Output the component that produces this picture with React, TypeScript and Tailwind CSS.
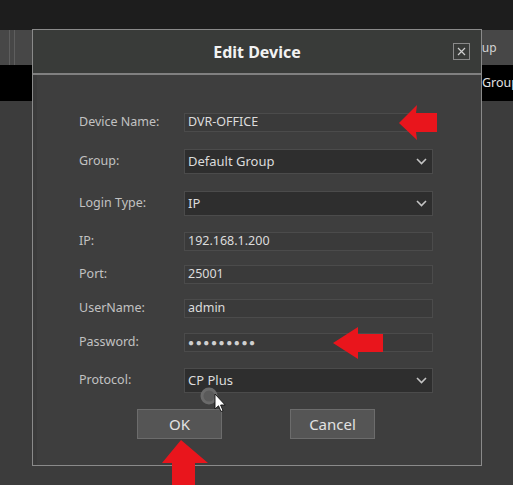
const font = { fontFamily: '"Noto Sans", "Open Sans", "Liberation Sans", sans-serif' };

type Field = { label: string; value: string; kind: "input" | "select"; mt: string };

const fields: Field[] = [
  { label: "Device Name:", value: "DVR-OFFICE", kind: "input", mt: "mt-[38px]" },
  { label: "Group:", value: "Default Group", kind: "select", mt: "mt-[17px]" },
  { label: "Login Type:", value: "IP", kind: "select", mt: "mt-[17px]" },
  { label: "IP:", value: "192.168.1.200", kind: "input", mt: "mt-[16px]" },
  { label: "Port:", value: "25001", kind: "input", mt: "mt-[14px]" },
  { label: "UserName:", value: "admin", kind: "input", mt: "mt-[15px]" },
  { label: "Password:", value: "●●●●●●●●●", kind: "input", mt: "mt-[15px]" },
  { label: "Protocol:", value: "CP Plus", kind: "select", mt: "mt-[16px]" },
];

const Chevron = () => (
  <svg width="11" height="7" viewBox="0 0 11 7" className="shrink-0">
    <path d="M1 1l4.5 4.5L10 1" fill="none" stroke="#c4c4c4" strokeWidth="1.6" />
  </svg>
);

const Row = ({ f }: { f: Field }) => (
  <div className={`flex items-center ${f.mt}`}>
    <div className="w-[105px] pl-[46px] box-content text-[12.5px] text-[#c2c2c2] whitespace-nowrap">{f.label}</div>
    {f.kind === "input" ? (
      <div className="flex h-[19px] w-[249px] items-center border border-[#4b4b4b] bg-[#3a3a3a] pl-[3px] text-[12.5px] text-[#dcdcdc]">
        {f.label === "Password:" ? (
          <span className="text-[10px] tracking-[1.6px] text-[#d0d0d0]">{f.value}</span>
        ) : (
          f.value
        )}
      </div>
    ) : (
      <div className="flex h-[25px] w-[249px] items-center justify-between border border-[#4b4b4b] bg-[#2e2e2e] pl-[3px] pr-[5px] text-[13px] text-[#dcdcdc]">
        <span>{f.value}</span>
        <Chevron />
      </div>
    )}
  </div>
);

export default function App() {
  return (
    <div className="relative h-[485px] w-[513px] overflow-hidden bg-[#3c3c3c]" style={font}>
      {/* background window */}
      <div className="h-[30px] bg-[#1d1d1d]" />
      <div className="flex h-[35px] items-center bg-[#474747] text-[12px] text-[#d4d4d4]">
        <div className="ml-[9px] h-full w-[1px] bg-[#5e5e5e]" />
        <div className="ml-[4px] h-full w-[1px] bg-[#5e5e5e]" />
        <span className="ml-[446px]">Group</span>
      </div>
      <div className="flex h-[36px] items-center bg-black pl-[482px] text-[12.5px] text-[#e2e2e2]">Group</div>

      {/* dialog */}
      <div className="absolute left-[32px] top-[29px] flex h-[437px] w-[450px] flex-col border border-[#8a8a8a] bg-[#3e3e3e] shadow-[inset_4px_0_0_#3a3a3a]">
        <div className="relative flex h-[43px] shrink-0 items-center justify-center bg-[#393b39]">
          <span className="text-[16px] font-bold text-[#f2f2f2]">Edit Device</span>
          <div className="absolute left-[420px] top-[13px] flex h-[17px] w-[17px] items-center justify-center border border-[#8a8a8a]">
            <svg width="9" height="9" viewBox="0 0 9 9">
              <path d="M1 1l7 7M8 1l-7 7" stroke="#cfcfcf" strokeWidth="1.2" />
            </svg>
          </div>
        </div>
        <div className="h-[2px] shrink-0 bg-[#808080]" />
        <div className="flex flex-col">
          {fields.map((f) => (
            <Row key={f.label} f={f} />
          ))}
          <div className="mt-[16px] flex pl-[104px]">
            <button className="flex h-[30px] w-[85px] items-center justify-center border border-[#6c6c6c] bg-[#555555] text-[15px] text-[#e2e2e2]">
              OK
            </button>
            <button className="ml-[68px] flex h-[30px] w-[85px] items-center justify-center border border-[#6c6c6c] bg-[#555555] text-[15px] text-[#e2e2e2]">
              Cancel
            </button>
          </div>
        </div>
      </div>

      {/* annotations and cursor */}
      <svg className="pointer-events-none absolute inset-0" width="513" height="485" viewBox="0 0 513 485">
        <polygon points="399,123 417,105 416,113 437,113 437,132 416,132 417,140" fill="#e9151c" />
        <polygon points="333,343 358,327 358,334 383,334 383,352 358,352 358,359" fill="#e9151c" />
        <polygon points="181,440 208,463 195,463 195,485 172,485 172,463 162,463" fill="#e9151c" />
        <circle cx="209" cy="396" r="8.5" fill="#6a6a6a" />
        <circle cx="209" cy="396" r="5.5" fill="#5a5a5a" />
        <path d="M215 394 L215 409 L218.5 405.8 L221 411.5 L223 410.6 L220.6 405 L225.2 405 Z" fill="#ffffff" stroke="#111" strokeWidth="0.9" />
      </svg>
    </div>
  );
}
